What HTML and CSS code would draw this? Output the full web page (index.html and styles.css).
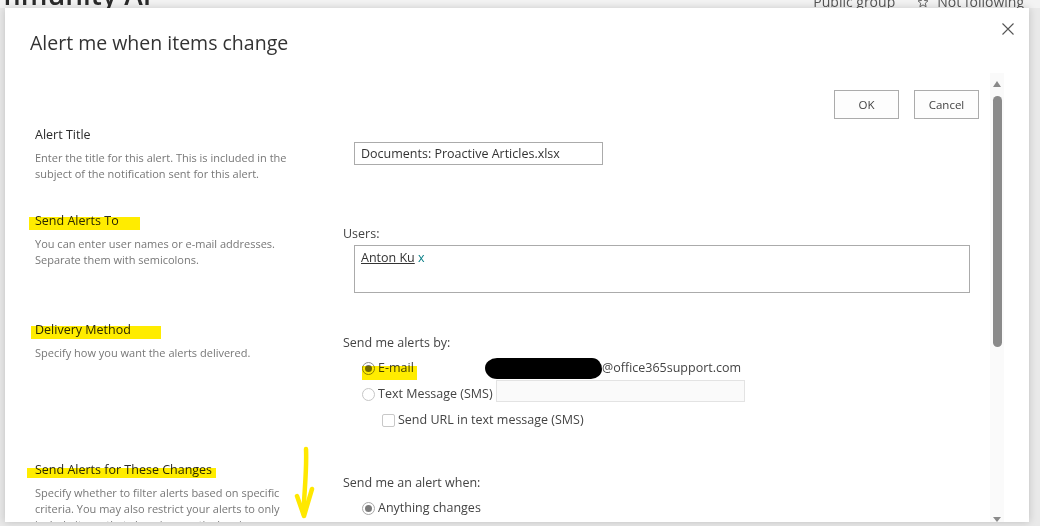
FILE: index.html
```html
<!DOCTYPE html>
<html lang="en">
<head>
<meta charset="utf-8">
<title>Alert me when items change</title>
<link rel="stylesheet" href="styles.css">
</head>
<body>
<div class="page">
  <div class="page-head">
    <span class="site-name">mmunity AI</span>
    <svg class="site-icon" width="16" height="16" viewBox="0 0 16 16"><circle cx="6" cy="5" r="3" fill="none" stroke="#555" stroke-width="1.2"/><circle cx="11" cy="7" r="2.5" fill="none" stroke="#555" stroke-width="1.2"/></svg>
    <span class="spacer"></span>
    <span class="meta">Public group</span>
    <span class="meta follow"><svg width="12" height="12" viewBox="0 0 12 12"><path d="M6 1 L7.5 4.5 L11 4.8 L8.3 7.2 L9.1 10.8 L6 8.9 L2.9 10.8 L3.7 7.2 L1 4.8 L4.5 4.5 Z" fill="none" stroke="#666" stroke-width="1"/></svg>Not following</span>
  </div>
  <div class="page-side"></div>
</div>

<div class="dialog">
  <div class="dlg-head">
    <h1 class="dlg-title">Alert me when items change</h1>
    <button class="close" aria-label="Close">
      <svg width="12" height="12" viewBox="0 0 12 12"><path d="M0.5 0.5 L11.5 11.5 M11.5 0.5 L0.5 11.5" stroke="#555" stroke-width="1.1" fill="none"/></svg>
    </button>
  </div>

  <div class="dlg-body">
    <div class="content">
      <div class="actions">
        <button class="btn">OK</button>
        <button class="btn">Cancel</button>
      </div>

      <div class="sections">
        <div class="sec sec-first">
          <div class="sec-left">
            <div class="sec-title">Alert Title</div>
            <div class="sec-desc">Enter the title for this alert. This is included in the subject of the notification sent for this alert.</div>
          </div>
          <div class="sec-right sec-right-tight">
            <div class="text-input">Documents: Proactive Articles.xlsx</div>
          </div>
        </div>

        <div class="sec">
          <div class="sec-left">
            <div class="sec-title"><span class="hl hl-to">Send Alerts To</span></div>
            <div class="sec-desc">You can enter user names or e-mail addresses. Separate them with semicolons.</div>
          </div>
          <div class="sec-right">
            <div class="field-label">Users:</div>
            <div class="people-box"><span class="person">Anton Ku</span> <span class="remove">x</span></div>
          </div>
        </div>

        <div class="sec">
          <div class="sec-left">
            <div class="sec-title"><span class="hl hl-method">Delivery Method</span></div>
            <div class="sec-desc">Specify how you want the alerts delivered.</div>
          </div>
          <div class="sec-right">
            <div class="field-label">Send me alerts by:</div>
            <div class="opts">
              <div class="opt">
                <span class="opt-label hl-email"><span class="radio checked"></span>E-mail</span>
                <span class="blob"></span><span class="opt-value">@office365support.com</span>
              </div>
              <div class="opt">
                <span class="opt-label"><span class="radio"></span>Text Message (SMS)</span>
                <span class="sms-input"></span>
              </div>
              <div class="opt opt-sub">
                <span class="check"></span>Send URL in text message (SMS)
              </div>
            </div>
          </div>
        </div>

        <div class="sec">
          <div class="sec-left">
            <div class="sec-title"><span class="hl hl-changes">Send Alerts for These Changes</span></div>
            <div class="sec-desc">Specify whether to filter alerts based on specific criteria. You may also restrict your alerts to only include items that show in a particular view.</div>
          </div>
          <div class="sec-right">
            <div class="field-label">Send me an alert when:</div>
            <div class="opts">
              <div class="opt">
                <span class="opt-label"><span class="radio checked grey"></span>Anything changes</span>
              </div>
            </div>
          </div>
        </div>
      </div>
    </div>

    <div class="scrollbar">
      <span class="arrow up"></span>
      <span class="thumb"></span>
      <span class="arrow down"></span>
    </div>
  </div>

  <svg class="pen-arrow" width="30" height="80" viewBox="0 0 30 80">
    <path d="M16 6 C17 28 14 50 13.5 71" stroke="#ffe800" stroke-width="4.5" stroke-linecap="round" fill="none"/>
    <path d="M7 53 L14 73 L22 46" stroke="#ffe800" stroke-width="4.5" stroke-linecap="round" stroke-linejoin="round" fill="none"/>
  </svg>
</div>
</body>
</html>
```

FILE: styles.css
```css
* { box-sizing: border-box; }

html, body {
  margin: 0;
  height: 100%;
}

body {
  background: #e9e9e9;
  font-family: "Open Sans", "Noto Sans", sans-serif;
  overflow: hidden;
  position: relative;
}

/* page behind the modal */
.page {
  height: 100%;
}

.page-head {
  display: flex;
  align-items: flex-end;
  height: 8px;
  background: #f3f3f3;
  overflow: hidden;
  white-space: nowrap;
}

.site-name {
  font-size: 28px;
  font-weight: 600;
  color: #2b2b2b;
  line-height: 34px;
  margin-left: -6px;
  margin-bottom: -3px;
}

.site-icon {
  margin-left: 12px;
  margin-bottom: 2px;
}

.spacer { flex: 1; }

.meta {
  font-size: 14px;
  color: #555;
  line-height: 18px;
  margin-bottom: -3px;
  display: flex;
  align-items: center;
  gap: 8px;
}

.follow {
  margin-left: 22px;
  margin-right: 16px;
}

.page-side {
  height: calc(100% - 8px);
  background: #e9e9e9;
}

/* modal */
.dialog {
  position: absolute;
  left: 5px;
  top: 8px;
  width: 1024px;
  height: 514px;
  background: #fff;
  box-shadow: 0 0 8px rgba(0, 0, 0, 0.18);
  display: flex;
  flex-direction: column;
  overflow: hidden;
}

.dlg-head {
  display: flex;
  align-items: flex-start;
  justify-content: space-between;
  height: 65px;
  padding: 22px 15px 0 25px;
  flex: none;
}

.dlg-title {
  margin: 0;
  font-size: 19.5px;
  font-weight: 400;
  line-height: 26px;
  color: #333;
}

.close {
  width: 12px;
  height: 12px;
  padding: 0;
  margin-top: -7px;
  border: 0;
  background: none;
  display: flex;
}

.dlg-body {
  flex: 1;
  display: flex;
  min-height: 0;
}

.content {
  flex: 1;
  padding: 17px 11px 0 30px;
  overflow: hidden;
}

.actions {
  display: flex;
  justify-content: flex-end;
  gap: 15px;
}

.btn {
  width: 65px;
  height: 29px;
  border: 1px solid #ababab;
  background: #fdfdfd;
  font-family: inherit;
  font-size: 11.5px;
  color: #444;
  padding: 0;
}

.sections {
  margin-top: 8px;
}

.sec {
  display: grid;
  grid-template-columns: 308px 1fr;
  padding-bottom: 29px;
}

.sec-first {
  padding-bottom: 31px;
}

.sec-title {
  font-size: 12.5px;
  line-height: 16px;
  color: #2b2b2b;
}

.sec-desc {
  margin-top: 7px;
  font-size: 11px;
  line-height: 16px;
  color: #777;
  max-width: 262px;
}

.sec-right {
  padding-top: 13px;
  font-size: 12.5px;
  line-height: 16px;
  color: #444;
}

.sec-right-tight {
  padding-top: 15px;
}

.field-label {
  height: 16px;
}

.text-input {
  margin-left: 11px;
  width: 249px;
  height: 23px;
  border: 1px solid #ababab;
  padding: 0 6px;
  line-height: 21px;
  color: #333;
}

.people-box {
  margin-left: 11px;
  margin-top: 3px;
  width: 616px;
  height: 48px;
  border: 1px solid #ababab;
  padding: 4px 6px;
  color: #333;
}

.person {
  text-decoration: underline;
}

.remove {
  color: #0b7f87;
}

.opts {
  margin-top: 4px;
}

.opt {
  display: flex;
  align-items: center;
  height: 26px;
  padding-left: 19px;
}

.opt-label {
  display: flex;
  align-items: center;
  gap: 3px;
  width: 134px;
  flex: none;
  position: relative;
}

.opt-sub {
  padding-left: 39px;
  gap: 3px;
}

.radio {
  width: 13px;
  height: 13px;
  border-radius: 50%;
  border: 1px solid #c6c6c6;
  background: #fff;
  flex: none;
  position: relative;
}

.radio.checked {
  border-color: #8d8d8d;
}

.radio.checked::after {
  content: "";
  position: absolute;
  inset: 2px;
  border-radius: 50%;
  background: #6f6f6f;
}

.radio.grey {
  border-color: #a8a8a8;
}

.radio.grey::after {
  background: #7b7b7b;
}

.check {
  width: 13px;
  height: 13px;
  border: 1px solid #c8c8c8;
  border-radius: 2px;
  background: #fff;
  flex: none;
}

.blob {
  width: 117px;
  height: 21px;
  background: #000;
  border-radius: 12px 10px 11px 12px / 10px 11px 10px 11px;
  margin-left: -11px;
  flex: none;
}

.sms-input {
  width: 249px;
  height: 22px;
  background: #fafafa;
  border: 1px solid #e3e3e3;
  margin-bottom: 6px;
}

/* highlighter strokes */
.hl {
  position: relative;
  display: inline-block;
}

.hl::after,
.hl-email::after {
  content: "";
  position: absolute;
  background: #ffec00;
  mix-blend-mode: multiply;
}

.hl-to::after { left: -6px; width: 111px; top: 4px; bottom: -1px; }
.hl-method::after { left: -4px; width: 130px; top: 4px; bottom: -1px; }
.hl-changes::after { left: -8px; width: 189px; top: 6px; bottom: 0; }
.hl-email::after { left: 0; width: 55px; top: 6px; height: 14px; }

/* scroll rail */
.scrollbar {
  width: 14px;
  margin-right: 25px;
  background: #fafafa;
  display: flex;
  flex-direction: column;
  align-items: center;
  flex: none;
}

.arrow {
  width: 0;
  height: 0;
  border-left: 4px solid transparent;
  border-right: 4px solid transparent;
}

.arrow.up {
  margin-top: 8px;
  border-bottom: 6px solid #8a8a8a;
}

.arrow.down {
  margin-top: auto;
  border-top: 5px solid #8a8a8a;
}

.thumb {
  margin-top: 9px;
  width: 9px;
  height: 251px;
  border-radius: 5px;
  background: #8a8a8a;
}

.pen-arrow {
  position: absolute;
  left: 285px;
  top: 435px;
}
```
